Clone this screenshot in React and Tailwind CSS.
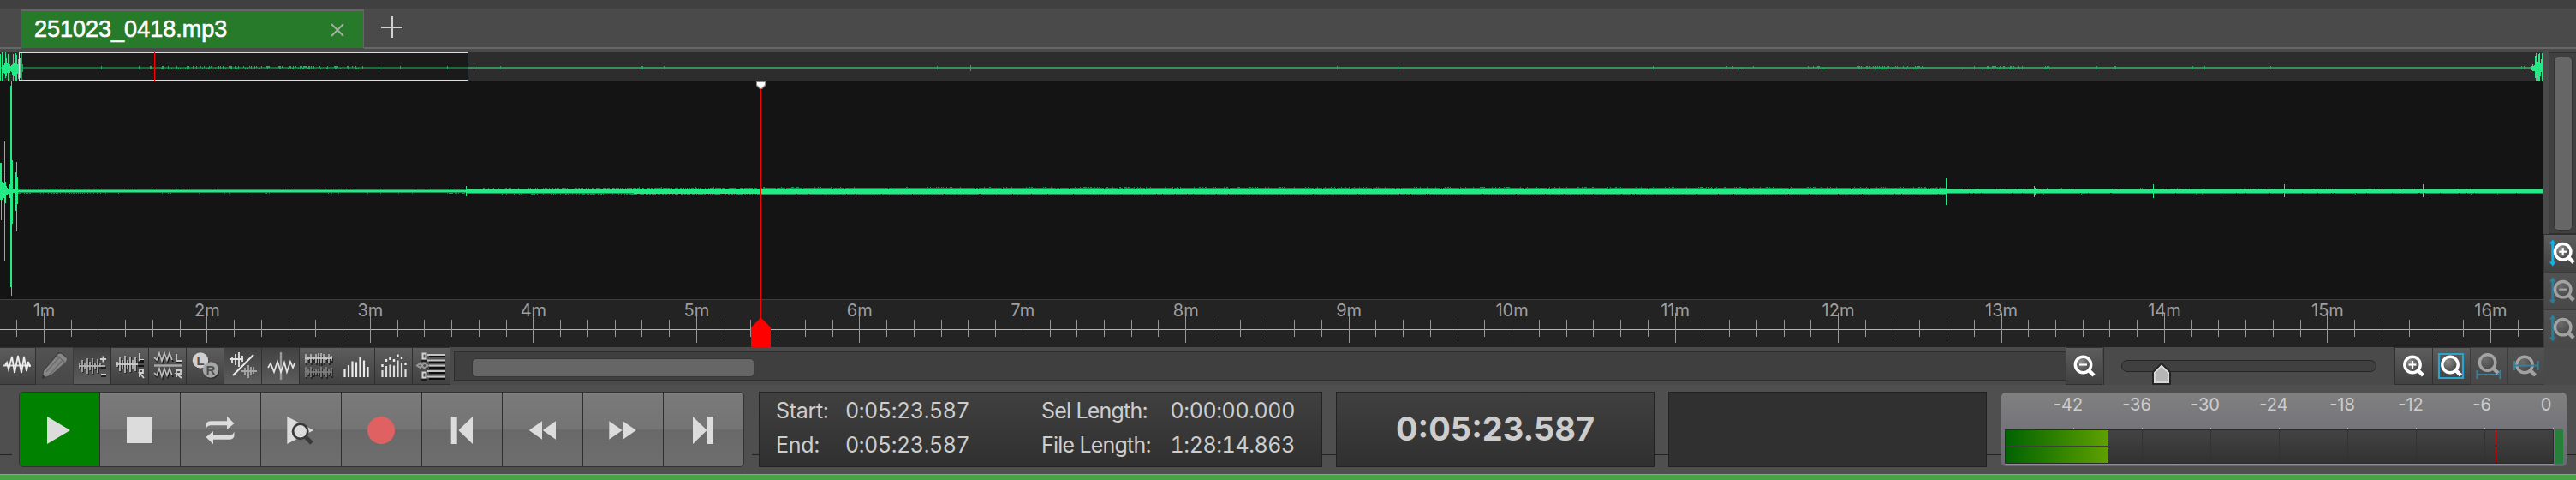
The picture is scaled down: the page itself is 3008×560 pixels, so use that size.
import React from "react";

/* ================= DATA ================= */

const WAVE_WIDTH = 2969;
const MINUTE = 190.46;
const FIRST_MINUTE = 51.5;

// small seeded generator, keeps the waveform stable between renders
const createRandom = (seed) => () => {
  seed = (seed * 1664525 + 1013904223) % 4294967296;
  return seed / 4294967296;
};

const bar = (x, top, bottom, w = 1) => `M${x} ${top}h${w}V${bottom}h-${w}z`;

const buildTrack = () => {
  const rnd = createRandom(418);
  let dim = "";
  let bright = "";
  for (let x = 21; x < WAVE_WIDTH; x++) {
    let half = 1;
    let raise = 0.06;
    let lower = 0;
    if (x < 115) raise = 0.35;
    else if (x >= 520 && x < 544) raise = 0.5;
    else if (x >= 544 && x < 740) {
      half = 2;
      raise = (x - 544) / 300;
    } else if (x >= 740 && x < 888) {
      half = 3;
      raise = 0.04;
      lower = 0.35;
    } else if (x >= 888 && x < 2273) {
      half = 3;
      raise = x > 1060 ? 0.22 : 0.08;
      lower = 0.04;
    } else if (x >= 2273) {
      half = 2;
      raise = 0.01;
      lower = 0.05;
    }
    const edge = () => {
      const r = rnd();
      if (r < raise) return half + 2;
      return r > 1 - lower ? half : half + 1;
    };
    dim += bar(x, 128 - edge(), 128 + edge());
    bright += bar(x, 128 - half, 128 + half);
  }
  return { dim, bright };
};

const track = buildTrack();

// [x, top, bottom, width]
const spikes = [
  [0, 95, 138, 2],
  [1, 119, 162, 1],
  [2, 117, 138, 1],
  [3, 110, 139, 1],
  [4, 119, 136, 1],
  [5, 70, 209, 1],
  [6, 117, 142, 1],
  [7, 122, 133, 1],
  [8, 124, 132, 1],
  [9, 125, 131, 1],
  [10, 120, 133, 1],
  [11, 120, 136, 1],
  [12, 5, 240, 1],
  [13, 0, 250, 1],
  [14, 92, 166, 1],
  [15, 126, 130, 2],
  [17, 124, 131, 1],
  [18, 106, 151, 1],
  [19, 94, 175, 1],
  [20, 112, 143, 1],
  [544, 122, 134, 1],
  [2272, 113, 144, 1],
  [2375, 122, 135, 1],
  [2376, 124, 132, 1],
  [2514, 120, 136, 1],
  [2667, 120, 135, 1],
  [2829, 120, 135, 1],
];

const overviewTicks = (() => {
  const rnd = createRandom(77);
  let d = "";
  const burst = (from, to, density) => {
    for (let x = from; x < to; x++) {
      if (rnd() < density) {
        const side = rnd();
        d += bar(x, side < 0.7 ? 16 : 18, side > 0.3 ? 20 : 18);
      }
    }
  };
  burst(170, 205, 0.2);
  burst(205, 245, 0.5);
  burst(245, 317, 0.4);
  burst(325, 390, 0.55);
  burst(390, 424, 0.45);
  burst(2005, 2050, 0.12);
  burst(2108, 2142, 0.35);
  burst(2168, 2248, 0.55);
  burst(2285, 2315, 0.1);
  burst(2320, 2362, 0.5);
  burst(2387, 2394, 0.9);
  [118, 162, 189, 442, 467, 522, 553, 584, 749, 750, 775, 1094, 1561, 1632, 1930, 2448, 2469, 2470, 2560, 2574, 2649, 2651, 2944, 2947].forEach(
    (x) => (d += bar(x, 16, 20))
  );
  d += bar(1133, 15, 22);
  return d;
})();

const overviewStart = [
  [0, 2, 33], [2, 0, 34], [3, 1, 34], [4, 15, 24], [5, 13, 25], [6, 0, 30], [7, 7, 28],
  [8, 13, 24], [9, 2, 34], [10, 3, 34], [11, 14, 24], [12, 16, 22], [13, 15, 23], [14, 14, 26],
  [15, 2, 34], [16, 12, 28], [17, 1, 34], [18, 1, 34], [19, 3, 34], [20, 14, 25], [21, 8, 31],
  [22, 13, 25], [23, 7, 30], [24, 1, 33], [25, 1, 33], [26, 14, 23],
];

const overviewEnd = [
  [2955, 16, 20], [2956, 16, 21], [2957, 14, 22], [2958, 16, 22], [2959, 15, 22], [2960, 4, 30],
  [2961, 1, 34], [2962, 13, 24], [2963, 11, 33], [2964, 2, 34], [2965, 1, 34], [2966, 13, 28],
  [2967, 8, 23], [2968, 1, 34],
];

const meterScale = [
  { label: "-42", x: 78 },
  { label: "-36", x: 158 },
  { label: "-30", x: 238 },
  { label: "-24", x: 318 },
  { label: "-18", x: 398 },
  { label: "-12", x: 478 },
  { label: "-6", x: 561 },
  { label: "0", x: 636 },
];

const toBars = (list) => list.map(([x, t, b, w]) => bar(x, t, b, w || 1)).join("");

/* ================= ICONS ================= */

const Magnifier = ({ cx = 20.5, cy = 20.5, sign, opacity = 1 }) => (
  <g opacity={opacity}>
    <circle cx={cx} cy={cy} r="9.2" fill="url(#lens)" stroke="#fff" strokeWidth="3.4" />
    <path d={`M${cx + 6.5} ${cy + 6.5}l6 6`} stroke="#fff" strokeWidth="4.4" />
    {sign && <path d={`M${cx - 4.5} ${cy}h9`} stroke="#fff" strokeWidth="2.2" />}
    {sign === "+" && <path d={`M${cx} ${cy - 4.5}v9`} stroke="#fff" strokeWidth="2.2" />}
  </g>
);

const VerticalArrow = ({ opacity = 1 }) => (
  <g opacity={opacity} fill="#0db4ee">
    <path d="M9.3 10h3v24h-3z" />
    <path d="M10.8 6.5l4 5h-8zM10.8 37.5l4-5h-8z" />
  </g>
);

const WaveIcon = () => (
  <>
    <path d="M6 21.5h32" stroke="#d8d8d8" strokeWidth="2" />
    <path
      d="M8 21l2-3 2 8 4-15 3 19 4-20 4 20 3-19 3 17 2-11 2 6"
      stroke="#ededed"
      strokeWidth="1.8"
      fill="none"
    />
  </>
);

const PencilIcon = () => (
  <g>
    <path d="M8 29L25 8q2-2 5 0l5 4q2 2 1 5L17 34 7 38z" fill="#3c3c3c" transform="translate(0 -1)" />
    <path d="M9 28L26 8q2-1 4 0l5 4q2 2 0 5L18 32 8 36z" fill="#868686" />
    <path d="M24 9l10 9M12 29L27 12M16 32L31 15" stroke="#6c6c6c" strokeWidth="1.2" />
    <path d="M8 32l3 3-4 2z" fill="#333" />
  </g>
);

const combs = (x, y, heights, step = 3) =>
  heights.map((h, i) => `M${x + i * step} ${y - h}v${h * 2}`).join("");

const GainIcon = () => (
  <g fill="none">
    <path d={combs(8, 23, [3, 7, 4, 9, 5, 9, 4, 8, 3])} stroke="#222" strokeWidth="1.6" />
    <path d={combs(7, 22, [3, 7, 4, 9, 5, 9, 4, 8, 3])} stroke="#b4b4b4" strokeWidth="1.6" />
    <path d="M6 22h31" stroke="#b4b4b4" strokeWidth="1.8" />
    <path d="M31 14h7M34.500 10.500v7M32 32h6" stroke="#d0d0d0" strokeWidth="2" />
    <path d="M32 34h6M30 24h8" stroke="#111" strokeWidth="1.6" />
  </g>
);

const MixIcon = () => (
  <g fill="none">
    <path d={combs(8, 21, [3, 8, 5, 10, 5, 9, 5, 8])} stroke="#222" strokeWidth="1.6" />
    <path d={combs(7, 20, [3, 8, 5, 10, 5, 9, 5, 8])} stroke="#c4c4c4" strokeWidth="1.6" />
    <path d="M6 20h25" stroke="#cecece" strokeWidth="1.8" />
    <path d="M33 7v8h5M33 35V26h4v4h-4l5 6" stroke="#d2d2d2" strokeWidth="1.8" />
    <path d="M31 18h7M31 22h7M34 16h4" stroke="#151515" strokeWidth="1.8" />
  </g>
);

const StereoIcon = () => (
  <g fill="none">
    <path d="M6 12l3 3 3-8 3 9 3-9 3 8 3-8 3 8M6 30l3 3 3-8 3 9 3-9 3 8 3-8 3 8" stroke="#1a1a1a" strokeWidth="1.800" transform="translate(1 2)" />
    <path d="M6 12l3 3 3-8 3 9 3-9 3 8 3-8 3 8M6 30l3 3 3-8 3 9 3-9 3 8 3-8 3 8" stroke="#bebebe" strokeWidth="1.7" />
    <path d="M6 21.500h32" stroke="#a9a9a9" strokeWidth="2.4" />
    <path d="M32 8v8h6M32 35v-8h5v4h-5l6 5" stroke="#ccc" strokeWidth="1.8" />
    <path d="M31 18h8" stroke="#111" strokeWidth="1.6" />
  </g>
);

const ChannelsIcon = () => (
  <>
    <circle cx="17" cy="17" r="9" fill="#2a2a2a" />
    <circle cx="16" cy="15.500" r="9.3" fill="#cfcfcf" />
    <text x="16" y="21" textAnchor="middle" className="font-['Liberation_Sans'] text-[15px] font-bold" fill="#505050">L</text>
    <circle cx="29" cy="28" r="9" fill="#2a2a2a" />
    <circle cx="28" cy="26.500" r="9.3" fill="#a6a6a6" />
    <text x="28" y="32" textAnchor="middle" className="font-['Liberation_Sans'] text-[15px] font-bold" fill="#505050">R</text>
  </>
);

const InvertIcon = () => (
  <g fill="none">
    <path d="M6 14h16M9 11v8M13 8v13M17 6v17M21 10v7" stroke="#e4e4e4" strokeWidth="1.8" />
    <path d="M20 28h18M24 24v8M28 21v15M31 23v9M34 23v8" stroke="#a6a6a6" strokeWidth="1.8" />
    <path d="M10 33L34 9" stroke="#e8e8e8" strokeWidth="2.200" />
  </g>
);

const DcOffsetIcon = () => (
  <g fill="none">
    <path d="M22 6v32" stroke="#9a9a9a" strokeWidth="2.4" />
    <path d="M7 24l3-5 4 10 4-12 4 12 4-11 3 11 4-12 3 7 2-5" stroke="#e4e4e4" strokeWidth="1.8" />
  </g>
);

const SplitIcon = () => (
  <g fill="none">
    <path d={combs(8, 14, [5, 2, 5, 2, 5, 6, 6, 5, 2, 5, 3])} stroke="#1a1a1a" strokeWidth="1.5" transform="translate(0 2)" />
    <path d={combs(7, 13, [5, 2, 5, 2, 5, 6, 6, 5, 2, 5, 3])} stroke="#bcbcbc" strokeWidth="1.5" />
    <path d="M6 13h32" stroke="#c8c8c8" strokeWidth="1.8" />
    <path d={combs(8, 31, [6, 3, 6, 4, 3, 4, 6, 3, 6, 3, 5])} stroke="#1c1c1c" strokeWidth="1.5" />
    <path d={combs(7, 29, [6, 3, 6, 4, 3, 4, 6, 3, 6, 3, 5])} stroke="#868686" strokeWidth="1.5" />
    <path d="M6 29h32" stroke="#7c7c7c" strokeWidth="1.8" />
  </g>
);

const SpectrumIcon = () => (
  <path
    d="M8.500 35v-9M13 35V21M17.500 35V16.500M22 35V17.500M26.500 35V11.500M31 35V15.500M35.500 35V23"
    stroke="#ebebeb"
    strokeWidth="2.200"
  />
);

const SpectrumPeakIcon = () => (
  <>
    <path
      d="M8.500 35v-8M13 35V22M17.500 35V20.500M22 35V21.500M26.500 35V15.500M31 35V18.500M35.500 35V26"
      stroke="#dedede"
      strokeWidth="2.200"
    />
    <path d="M8.500 20v3M13 14v3M17.500 12v3M22 14v3M26.500 8.500v3M31 11v3M35.500 18v3" stroke="#ebebeb" strokeWidth="2.400" />
  </>
);

const ListIcon = () => (
  <g fill="none">
    <path d="M19 11h19M19 17h19M19 24h19M19 30h19M19 37h19" stroke="#0e0e0e" strokeWidth="1.8" />
    <path d="M17 9h21M17 15.500h21M19 21.500h19M17 28h21M17 34.500h21" stroke="#c4c4c4" strokeWidth="1.8" />
    <path d="M11.500 7.500h4v6h-4zM11.500 29.500h4v6h-4z" stroke="#d2d2d2" strokeWidth="2" />
    <path d="M5 21.500l4-3 4 6 5-3-5-3-4 6z" stroke="#9a9a9a" strokeWidth="1.800" />
    <path d="M10 38h7M10 16h7" stroke="#111" strokeWidth="1.500" />
  </g>
);

const tools = [
  { icon: WaveIcon, tone: "raised" },
  { icon: PencilIcon, tone: "flat" },
  { icon: GainIcon, tone: "pressed" },
  { icon: MixIcon, tone: "raised" },
  { icon: StereoIcon, tone: "raised" },
  { icon: ChannelsIcon, tone: "raised" },
  { icon: InvertIcon, tone: "pressed" },
  { icon: DcOffsetIcon, tone: "pressed" },
  { icon: SplitIcon, tone: "raised" },
  { icon: SpectrumIcon, tone: "raised" },
  { icon: SpectrumPeakIcon, tone: "raised" },
  { icon: ListIcon, tone: "raised" },
];

const tones = {
  raised: "bg-linear-to-b from-[#5d5d5d] to-[#414141] border-[#303030]",
  pressed: "bg-linear-to-b from-[#424242] to-[#5c5c5c] border-[#303030]",
  flat: "bg-linear-to-b from-[#525252] to-[#484848] border-[#3c3c3c]",
};

const LOOP = "M30.500 42.500v-4q0-5.300 6-5.300H55v-5.500l8.500 8.300L55 43v-4.700H36q-4 0-5.500 4.200z";

const transport = [
  { name: "play", art: <path d="M33 28l27 16-27 16z" /> },
  { name: "stop", art: <path d="M32 29h30v30H32z" /> },
  {
    name: "loop",
    art: (
      <>
        <path d={LOOP} />
        <path d={LOOP} transform="rotate(180 47 44)" />
      </>
    ),
  },
  {
    name: "play-zoom",
    art: (
      <>
        <path d="M31.300 28L62 44 31.300 60z" />
        <path d="M53 52l7 7" stroke="#3a3a3a" strokeWidth="5" />
        <circle cx="46.700" cy="45.300" r="8.600" fill="#dcdcdc" stroke="#3a3a3a" strokeWidth="2.800" />
      </>
    ),
  },
  { name: "record", art: <circle cx="47" cy="44" r="16" fill="#e06161" /> },
  { name: "previous", art: <path d="M34.700 28h7v32h-7zM60 28v32L43.300 44z" /> },
  { name: "rewind", art: <path d="M47 33.300v21.400L31.700 44zM63 33.300v21.400L47.700 44z" /> },
  { name: "forward", art: <path d="M31.300 33.300v21.400L46.700 44zM47.300 33.300v21.400L62.800 44z" /> },
  { name: "next", art: <path d="M35 28v32l16.500-16zM52 28h7v32h-7z" /> },
];

/* ================= APP ================= */

const App = () => {
  return (
    <div className="flex h-[560px] w-[3008px] flex-col overflow-hidden bg-[#4a4a4a] font-['Inter',sans-serif]">
      <svg className="absolute size-0">
        <defs>
          <radialGradient id="lens" cx="0.35" cy="0.3" r="0.9">
            <stop offset="0" stopColor="#8d8d8d" />
            <stop offset="1" stopColor="#303030" />
          </radialGradient>
        </defs>
      </svg>

      <TabBar />

      <div className="flex h-[344px] shrink-0">
        <div className="relative flex w-[2970px] shrink-0 flex-col">
          <Overview />
          <Waveform />
          <Ruler />
          <Playhead />
        </div>
        <VerticalZoom />
      </div>

      <Toolbar />
      <BottomPanel />

      <div className="h-px shrink-0 bg-[#9a9a9a]" />
      <div className="h-[6px] shrink-0 bg-[#4aa346]" />
    </div>
  );
};

/* ================= SUB COMPONENTS ================= */

const TabBar = () => (
  <div className="flex h-[61px] shrink-0 flex-col">
    <div className="h-[10px] bg-[#404040]" />
    <div className="flex h-[47px]">
      <div className="w-6 border-b-2 border-[#666]" />
      <div className="mt-px flex h-[45px] w-[401px] items-center justify-between border-x border-t-2 border-[#666] bg-[#287a2b] pr-[22px] pl-[15px]">
        <span className="font-['Liberation_Sans',sans-serif] text-[27px] leading-none text-white [-webkit-text-stroke:0.6px_white]">
          251023_0418.mp3
        </span>
        <svg width="16" height="16" viewBox="0 0 16 16">
          <path d="M1 1l14 14M15 1L1 15" stroke="#a3b3a3" strokeWidth="1.8" />
        </svg>
      </div>
      <div className="flex-1 border-b-2 border-[#666] pt-[9px] pl-5">
        <svg width="25" height="25" viewBox="0 0 25 25">
          <path d="M13 0v25M0 13h25" stroke="#d2d2d2" strokeWidth="2" />
        </svg>
      </div>
    </div>
  </div>
);

const Overview = () => (
  <svg width="2970" height="34" shapeRendering="crispEdges" className="shrink-0 bg-[#2d2d2d]">
    <path d="M0 17h2969v2H0z" fill="#398f5c" />
    <path d="M22 0h525v33H22z" fill="#1a1a1a" />
    <path d="M22 17h525v2H22z" fill="#1d6b3d" />
    <path d={overviewTicks} fill="#1fae61" />
    <path d={toBars(overviewStart)} fill="#24ea86" />
    <path d="M24 1h2v32h-2zM26 14h1v9h-1z" fill="#1fa45c" />
    <path d={toBars(overviewEnd)} fill="#24ea86" />
    <path d="M22.500 0.500h524v32h-524z" fill="none" stroke="#cfe3e6" />
    <path d="M180 0h1v34h-1z" fill="#f00" />
  </svg>
);

const Waveform = () => (
  <svg width="2970" height="254" shapeRendering="crispEdges" className="shrink-0 bg-[#141414]">
    <path d={track.dim} fill="#1d8a50" />
    <path d={track.bright} fill="#24ea86" />
    <path d={toBars(spikes)} fill="#24ea86" />
  </svg>
);

const Ruler = () => {
  const ticks = [];
  for (let i = -1; i < 92; i++) {
    const x = Math.round(FIRST_MINUTE + (i * MINUTE) / 6 - 0.5);
    if (x > WAVE_WIDTH) break;
    ticks.push(i % 6 === 0 ? bar(x, 16, 51) : bar(x, 24, 44));
  }
  return (
    <svg width="2970" height="56" className="shrink-0 bg-[#232323]">
      <path d="M0 0h2970v1H0z" fill="#3f3f3f" />
      <path d="M0 35h2970v1H0z" fill="#b5b5b5" shapeRendering="crispEdges" />
      <path d={ticks.join("")} fill="#989898" shapeRendering="crispEdges" />
      {Array.from({ length: 16 }, (_, i) => (
        <text
          key={i}
          x={FIRST_MINUTE + i * MINUTE}
          y="20"
          textAnchor="middle"
          fill="#9e9e9e"
          className="font-['Inter'] text-[20px]"
        >
          {i + 1}m
        </text>
      ))}
    </svg>
  );
};

const Playhead = () => (
  <svg width="24" height="310" className="absolute top-[34px] left-[877px]">
    <path d="M11 0h1v310h-1z" fill="#f00" shapeRendering="crispEdges" />
    <path d="M6 0h11v5l-4 4h-3l-4-4z" fill="#8d8585" />
    <path d="M7 1h9v3l-4 4h-1l-4-4z" fill="#fff" />
    <path d="M11.500 275.500L23 287v23H0v-23z" fill="#f00" />
  </svg>
);

const VerticalZoom = () => (
  <div className="flex w-[38px] flex-col">
    <div className="ml-[6px] h-[212px] border border-r-0 border-[#303030] bg-[#404040] px-[5px] py-1">
      <div className="h-[203px] w-[22px] rounded-[5px] border border-[#333] bg-[#666]" />
    </div>
    {[{ sign: "+", o: 1 }, { sign: "-", o: 0.48 }, { sign: null, o: 0.48 }].map(({ sign, o }, i) => (
      <div key={i} className={`h-11 border-t border-l ${o === 1 ? tones.raised : tones.flat}`}>
        <svg width="37" height="43" viewBox="1 1 37 43">
          <VerticalArrow opacity={o} />
          <Magnifier cx={22.7} cy={20.7} sign={sign} opacity={o} />
        </svg>
      </div>
    ))}
  </div>
);

const ZoomButton = ({ tone = "raised", children }) => (
  <div className={`h-11 w-11 shrink-0 border-y border-l last:w-[43px] ${tones[tone]}`}>
    <svg width="43" height="42" viewBox="1 1 43 42">
      {children}
    </svg>
  </div>
);

const Toolbar = () => (
  <div className="flex h-11 shrink-0">
    <div className="-ml-0.5 flex w-[529px] shrink-0">
      {tools.map(({ icon: Icon, tone }, i) => (
        <div key={i} className={`h-11 w-11 border-y border-r ${tones[tone]}`}>
          <svg width="43" height="42" viewBox="0 1 43 42">
            <Icon />
          </svg>
        </div>
      ))}
    </div>

    {/* horizontal scroll */}
    <div className="mt-[5px] ml-[3px] h-[34px] w-[1882px] shrink-0 border border-r-0 border-[#2d2d2d] bg-[#3f3f3f] py-[7px] pl-5">
      <div className="h-[22px] w-[330px] rounded-[5px] border border-[#363636] bg-[#666]" />
    </div>

    <div className="w-[45px] shrink-0 border-r border-[#303030]">
      <ZoomButton>
        <Magnifier sign="-" />
      </ZoomButton>
    </div>

    <div className="relative ml-5 h-11 w-[298px] shrink-0 pt-[15px]">
      <div className="h-[14px] rounded-full border border-[#262626] bg-[#404040]" />
      <svg width="24" height="26" className="absolute top-[18px] left-[35px]">
        <path d="M12 1L2 11v14h20V11z" fill="#cfcfcf" stroke="#262626" strokeWidth="2" />
        <path d="M12 4L4 12v11h16V12z" fill="#b5b5b5" stroke="#dedede" strokeWidth="1.500" />
      </svg>
    </div>

    <div className="ml-[21px] flex">
      <ZoomButton>
        <Magnifier cx={21} sign="+" />
      </ZoomButton>
      <ZoomButton>
        <path d="M8 8h28v28H8z" fill="none" stroke="#29a3cf" strokeWidth="2.200" />
        <Magnifier cx={21} />
      </ZoomButton>
      <ZoomButton tone="flat">
        <path d="M8.500 27v10M35.500 27v10M8.500 32h27" fill="none" stroke="#397f97" strokeWidth="2.200" />
        <Magnifier cx={20.6} cy={18} opacity={0.48} />
      </ZoomButton>
      <ZoomButton tone="flat">
        <Magnifier cx={20} opacity={0.48} />
        <path d="M8 16v11M35.500 16v11M8 21.500h27" fill="none" stroke="#397f97" strokeWidth="2.200" />
      </ZoomButton>
    </div>
  </div>
);

const Panel = ({ className, children }) => (
  <div className={`h-[88px] shrink-0 border border-[#222] bg-linear-to-b from-[#404040] to-[#303030] text-[#cdcdcd] ${className}`}>
    {children}
  </div>
);

const BottomPanel = () => (
  <div className="flex h-[104px] shrink-0 bg-[linear-gradient(#4f4f4f_81px,#222_81px,#222_82px,#4f4f4f_82px)] pt-2">
    <div className="-mt-2 w-2 shrink-0" />
    <div className="mx-[6px] h-[88px] w-[864px] shrink-0 bg-[#4f4f4f] px-2">
      <div className="flex h-[88px] w-[847px] overflow-hidden rounded-[5px] border border-[#333]">
        {transport.map(({ name, art }) => (
          <div
            key={name}
            className={`w-[94px] shrink-0 border-r border-[#2e2e2e] last:border-r-0 ${
              name === "play"
                ? "bg-[#008200]"
                : "bg-[linear-gradient(#8a8a8a_1px,#7a7a7a_2px,#747474_43px,#696969_43px,#6e6e6e)]"
            }`}
          >
            <svg width="93" height="86" viewBox="1 0 93 86" fill="#dcdcdc">
              {art}
            </svg>
          </div>
        ))}
      </div>
    </div>

    <Panel className="ml-0.5 flex w-[658px] pt-px pl-[19px] text-[25px] leading-[40px]">
      <div className="w-[81px] tracking-[-0.3px]">
        <div>Start:</div>
        <div>End:</div>
      </div>
      <div className="w-[229px] tracking-[-0.4px] tabular-nums">
        <div>0:05:23.587</div>
        <div>0:05:23.587</div>
      </div>
      <div className="w-[150px] tracking-[-0.8px] whitespace-nowrap">
        <div>Sel Length:</div>
        <div>File Length:</div>
      </div>
      <div className="w-[146px] text-right tracking-[-0.4px] whitespace-nowrap tabular-nums">
        <div>0:00:00.000</div>
        <div>1:28:14.863</div>
      </div>
    </Panel>

    <Panel className="ml-4 flex w-[372px] items-center justify-center pb-px text-[38px] font-bold">
      0:05:23.587
    </Panel>

    <div className="ml-4 h-[88px] w-[372px] shrink-0 border border-[#222] bg-[#303030]" />

    <LevelMeter />
  </div>
);

const LevelMeter = () => (
  <div className="mt-px ml-[17px] h-[86px] w-[660px] shrink-0 rounded-[5px] bg-linear-to-b from-[#808080] to-[#6a6873]">
    <svg width="660" height="86">
      <defs>
        <linearGradient id="level" x1="0" x2="1">
          <stop offset="0" stopColor="#006300" />
          <stop offset="1" stopColor="#5ea000" />
        </linearGradient>
        <linearGradient id="meter" x1="0" x2="0" y1="0" y2="1">
          <stop offset="0" stopColor="#434343" />
          <stop offset="1" stopColor="#323232" />
        </linearGradient>
      </defs>
      {meterScale.map(({ label, x }) => (
        <text key={label} x={x} y="21" textAnchor="middle" fill="#cdcdcd" className="font-['Inter'] text-[20px]">
          {label}
        </text>
      ))}
      <path d="M4.500 43.500h640v39h-640z" fill="url(#meter)" stroke="#2a2a2a" />
      <path d="M4 83h641v1H4z" fill="#918f9a" />
      {meterScale.map(({ label }, i) => (
        <g key={label}>
          <path d={`M${84 + i * 80} 41h1v2h-1z`} fill="#b4b4b4" />
          {i < 7 && <path d={`M${84 + i * 80} 44h1v36h-1z`} fill="#333" />}
        </g>
      ))}
      <path d="M5 44h119v38H5z" fill="url(#level)" />
      <path d="M5 62h120v1H5z" fill="#3f3f3f" />
      <path d="M124 44h1v17h-1zM124 63h1v19h-1z" fill="#fff" />
      <path d="M577 44h1v17h-1zM577 63h1v18h-1z" fill="#e02020" />
      <path d="M646 43h10v40h-10z" fill="#27803a" />
    </svg>
  </div>
);

export default App;
